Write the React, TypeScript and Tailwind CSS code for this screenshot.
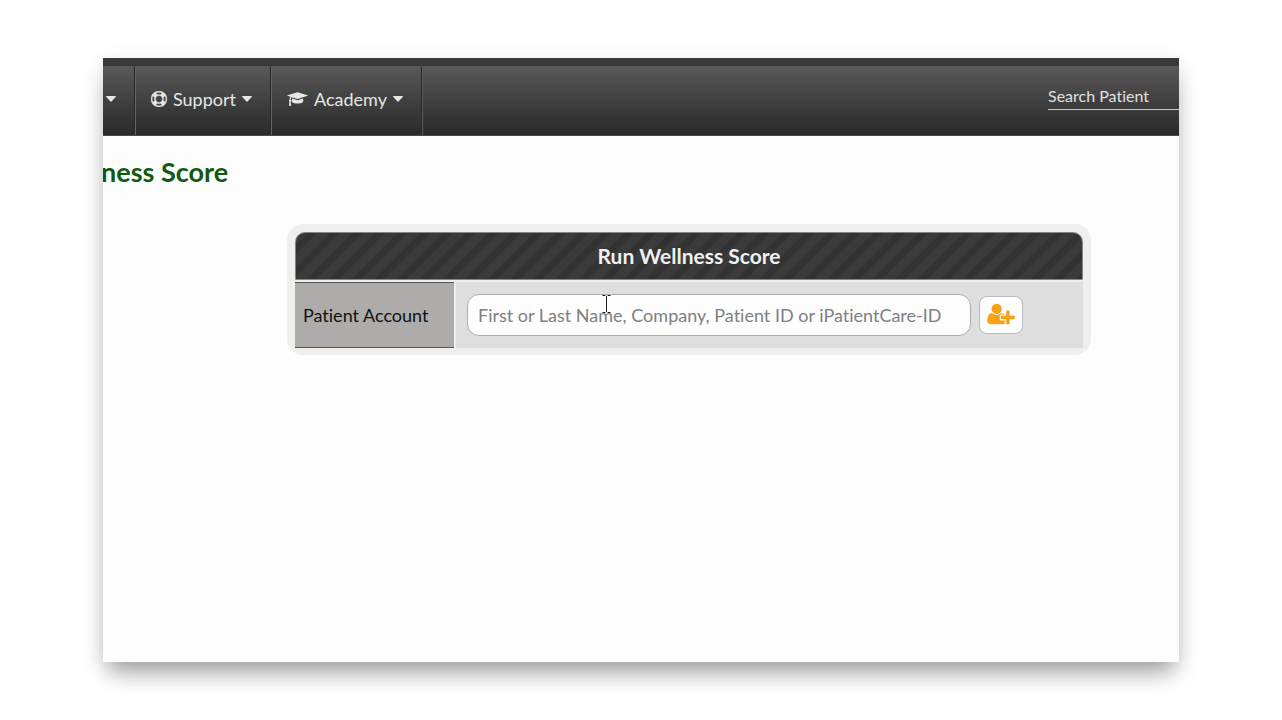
import type { ReactNode } from "react";

const LIFE_RING =
  "M896 0q182 0 348 71t286 191 191 286 71 348-71 348-191 286-286 191-348 71-348-71-286-191-191-286-71-348 71-348 191-286 286-191 348-71zm0 128q-190 0-361 90l194 194q82-28 167-28t167 28l194-194q-171-90-361-90zm-678 1129l194-194q-28-82-28-167t28-167l-194-194q-90 171-90 361t90 361zm678 407q190 0 361-90l-194-194q-82 28-167 28t-167-28l-194 194q171 90 361 90zm0-384q159 0 271.5-112.5t112.5-271.5-112.5-271.5-271.5-112.5-271.5 112.5-112.5 271.5 112.5 271.5 271.5 112.5zm484-217l194 194q90-171 90-361t-90-361l-194 194q28 82 28 167t-28 167z";
const GRADUATION_CAP =
  "M1774 836l18 316q4 69-82 128t-235 93.5-323 34.5-323-34.5-235-93.5-82-128l18-316 574 181q22 7 48 7t48-7zm530-324q0 23-22 31l-1120 352q-4 1-10 1t-10-1l-652-206q-43 34-71 111.5t-34 178.5q63 36 63 109 0 69-58 107l58 433q2 14-8 25-9 11-24 11h-192q-15 0-24-11-10-11-8-25l58-433q-58-38-58-107 0-73 65-111 11-207 98-330l-333-104q-22-8-22-31t22-31l1120-352q4-1 10-1t10 1l1120 352q22 8 22 31z";
const USER_PLUS =
  "M704 896q-159 0-271.5-112.5t-112.5-271.5 112.5-271.5 271.5-112.5 271.5 112.5 112.5 271.5-112.5 271.5-271.5 112.5zm960 128h352q13 0 22.5 9.5t9.5 22.5v192q0 13-9.5 22.5t-22.5 9.5h-352v352q0 13-9.5 22.5t-22.5 9.5h-192q-13 0-22.5-9.5t-9.5-22.5v-352h-352q-13 0-22.5-9.5t-9.5-22.5v-192q0-13 9.5-22.5t22.5-9.5h352v-352q0-13 9.5-22.5t22.5-9.5h192q13 0 22.5 9.5t9.5 22.5v352zm-736 224q0 52 38 90t90 38h256v238q-68 50-171 50h-874q-121 0-194-69t-73-190q0-53 3.5-103.5t14-109 26.5-108.5 43-97.5 62-81 85.5-53.5 111.5-20q19 0 39 17 79 61 154.5 91.5t164.5 30.5 164.5-30.5 154.5-91.5q20-17 39-17 132 0 217 96h-223q-52 0-90 38t-38 90v192z";

function Caret() {
  return (
    <svg viewBox="0 0 10 6" className="h-[6px] w-[10px]" fill="currentColor" aria-hidden="true">
      <path d="M.6 0h8.8q.9.3.3 1L5.500 5.500q-.5.400-1 0L.3 1Q-.3.3.6 0z" />
    </svg>
  );
}

function NavItem({ icon, label }: { icon: ReactNode; label: string }) {
  return (
    <button
      type="button"
      className="flex items-center gap-1.5 border-r border-l border-r-[#262626] border-l-[#666565] pr-[18px] pb-[3px] pl-[15px] text-[18px] leading-6 text-[#e6e6e6]"
    >
      {icon}
      <span>{label}</span>
      <Caret />
    </button>
  );
}

function TopBar() {
  return (
    <header className="border-t-8 border-[#393939]">
      <div className="flex h-[70px] justify-between border-b border-[#4a4a4a] bg-linear-to-b from-[#5a5858] to-[#2a2a2a]">
        <nav className="flex">
          <button
            type="button"
            aria-label="More"
            className="flex w-8 items-center border-r border-[#262626] pb-[3px] pl-[3px] text-[#e6e6e6]"
          >
            <Caret />
          </button>
          <NavItem
            label="Support"
            icon={
              <svg
                viewBox="0 0 1792 1792"
                className="size-4"
                fill="currentColor"
                stroke="currentColor"
                strokeWidth="50"
                aria-hidden="true"
              >
                <path d={LIFE_RING} />
              </svg>
            }
          />
          <NavItem
            label="Academy"
            icon={
              <svg viewBox="0 0 2304 1792" className="h-4 w-[21px]" fill="currentColor" aria-hidden="true">
                <path d={GRADUATION_CAP} />
              </svg>
            }
          />
          <div className="border-l border-[#5f5e5e]" />
        </nav>
        <input
          type="text"
          aria-label="Search Patient"
          placeholder="Search Patient"
          className="mt-4 h-7 w-[131px] border-b border-[#c9c9c9] bg-transparent text-[16px] text-[#e0e0e0] outline-none placeholder:text-[#e0e0e0]"
        />
      </div>
    </header>
  );
}

function TextCursor() {
  return (
    <svg
      viewBox="0 0 9 18"
      className="pointer-events-none absolute top-px left-[135px] h-[18px] w-[9px]"
      fill="none"
      stroke="#1c1c1c"
      aria-hidden="true"
    >
      <path d="M.5.5H3.500M5.500.5H8.500M4.500 1V17M.5 17.500H3.500M5.500 17.500H8.500" />
    </svg>
  );
}

export default function App() {
  return (
    <div className="flex min-h-screen flex-col bg-white px-[103px] py-[58px] font-[Lato,sans-serif] [font-variant-ligatures:none]">
      <main className="flex flex-1 flex-col overflow-hidden bg-[#fdfdfd] shadow-[0_16px_22px_-6px_rgba(0,0,0,0.34),0_4px_20px_rgba(0,0,0,0.1)]">
        <TopBar />
        <h1 className="-ml-0.5 pt-[18px] text-[27px] leading-9 font-bold text-[#0f5a10]">ness Score</h1>
        <form className="mt-[34px] mr-[88px] ml-[184px] flex flex-col gap-0.5 rounded-[16px] bg-[#efefed] p-2 pb-[7px]">
          <h2 className="rounded-t-[10px] border border-[#858585] bg-[repeating-linear-gradient(135deg,#3b3b3b_0px,#3b3b3b_7px,#323232_9px,#323232_14px,#3b3b3b_16px)] text-center text-[21px] leading-[46px] font-bold text-[#f0f0f0]">
            Run Wellness Score
          </h2>
          <div className="flex h-[66px] gap-0.5">
            <label
              htmlFor="patient"
              className="flex w-[159px] items-center border-y border-[#555] bg-[#adacaa] pl-2 text-[18px] text-[#111]"
            >
              Patient Account
            </label>
            <div className="flex flex-1 items-center gap-2 bg-[#dedede] pl-[11px]">
              <div className="relative">
                <input
                  id="patient"
                  type="text"
                  placeholder="First or Last Name, Company, Patient ID or iPatientCare-ID"
                  className="h-[42px] w-[504px] rounded-[12px] border border-[#acacac] bg-[#fdfdfd] px-2.5 text-[18px] text-[#333] outline-none placeholder:text-[#808080]"
                />
                <TextCursor />
              </div>
              <button
                type="button"
                aria-label="Add patient"
                className="flex h-[38px] w-11 items-center justify-center rounded-[8px] border border-[#b4bcc4] bg-[#fdfdfd] pb-0.5 text-[#f5a314]"
              >
                <svg viewBox="0 0 2048 1792" className="h-6 w-7" fill="currentColor" aria-hidden="true">
                  <path d={USER_PLUS} />
                </svg>
              </button>
            </div>
          </div>
        </form>
      </main>
    </div>
  );
}
